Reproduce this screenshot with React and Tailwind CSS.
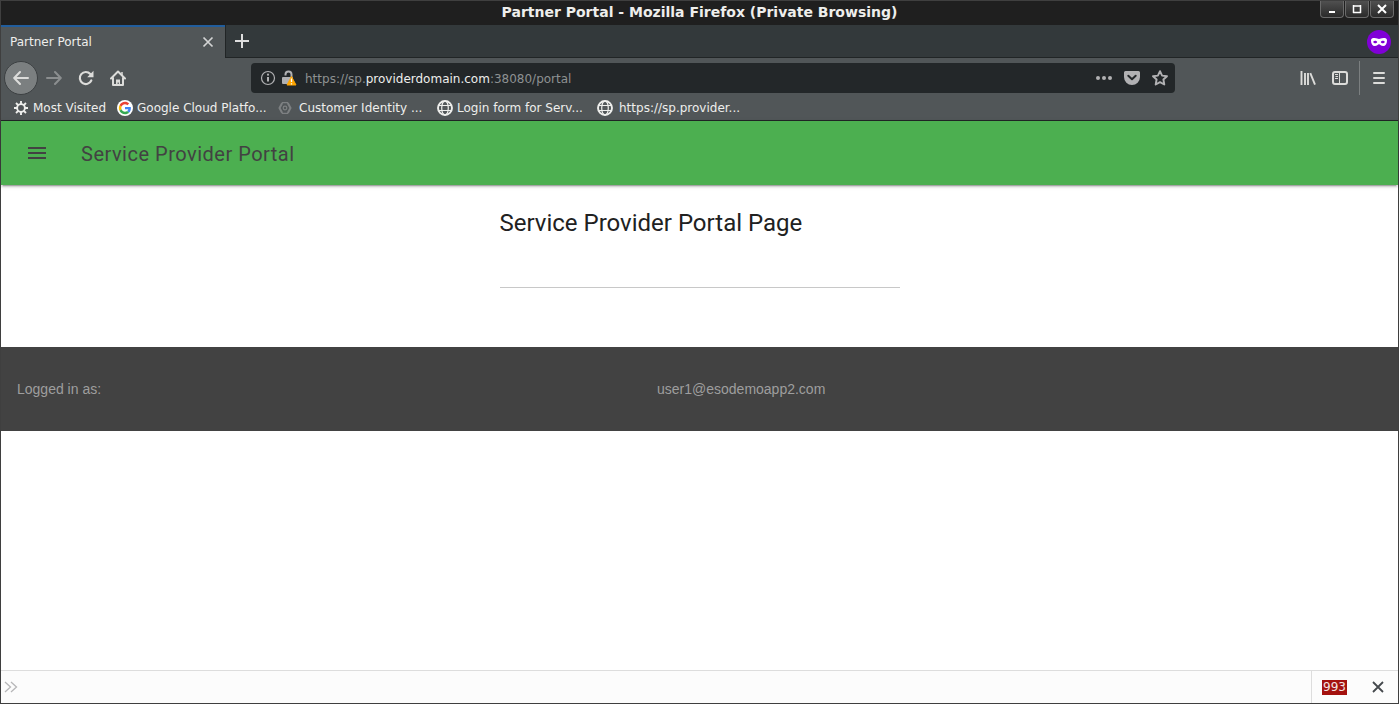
import React from "react";

function Icon({ size = 16, box = "0 0 16 16", className = "", children }) {
  return (
    <svg width={size} height={size} viewBox={box} fill="none" className={`shrink-0 ${className}`} aria-hidden="true">
      {children}
    </svg>
  );
}

const stroke = { stroke: "currentColor", strokeWidth: 2, strokeLinecap: "round", strokeLinejoin: "round" };

const BackIcon = () => (
  <Icon><path d="M15 8H2M7 2L1.200 8L7 14" {...stroke} /></Icon>
);
const ForwardIcon = () => (
  <Icon><path d="M1 8h13M9 2L14.800 8L9 14" {...stroke} /></Icon>
);
const ReloadIcon = () => (
  <Icon>
    <path d="M13.300 10.500A6 6 0 1 1 12.300 4" stroke="currentColor" strokeWidth="2.200" strokeLinecap="round" />
    <path d="M15.500 0.800V7.200H9.200Z" fill="currentColor" />
  </Icon>
);
const HomeIcon = () => (
  <Icon>
    <path d="M1 8.500L8 1.500L15 8.500" {...stroke} />
    <path d="M3 8v7h10V8" {...stroke} />
    <path d="M6 15v-5.500h4V15H8.800v-2.500H7.600V15Z" fill="currentColor" />
    <path d="M12 2v3" stroke="currentColor" strokeWidth="1.500" />
  </Icon>
);
const InfoIcon = () => (
  <Icon>
    <circle cx="8" cy="8" r="6.500" stroke="currentColor" strokeWidth="1.200" />
    <path d="M8 7v4.500" stroke="currentColor" strokeWidth="2" />
    <circle cx="8" cy="4.700" r="1.100" fill="currentColor" />
  </Icon>
);
const LockIcon = () => (
  <Icon>
    <path d="M4.500 5.500V4.500a3 3 0 0 1 6 0V8" stroke="#b1b1b3" strokeWidth="2" />
    <rect x="1" y="7" width="11" height="7" rx="1" fill="#b1b1b3" />
    <path d="M10.500 6.500L15 15H6Z" fill="#ffa500" stroke="#ffa500" strokeLinejoin="round" />
    <path d="M10.500 8.500v3.500M10.500 13.200v1.300" stroke="#fff" strokeWidth="1.300" />
  </Icon>
);
const DotsIcon = () => (
  <Icon><g fill="currentColor"><circle cx="2" cy="8" r="2" /><circle cx="8" cy="8" r="2" /><circle cx="14" cy="8" r="2" /></g></Icon>
);
const PocketIcon = () => (
  <Icon>
    <path d="M1.500 1h13A1.500 1.500 0 0 1 16 2.500V7A8 8 0 0 1 0 7V2.500A1.500 1.500 0 0 1 1.500 1Z" fill="currentColor" />
    <path d="M4.300 5.800L8 9.300L11.700 5.800" stroke="#232729" strokeWidth="2" strokeLinecap="round" strokeLinejoin="round" />
  </Icon>
);
const StarIcon = () => (
  <Icon>
    <path d="M8 1.200L10.100 5.600L15 6.200L11.400 9.500L12.300 14.500L8 12.100L3.700 14.500L4.600 9.500L1 6.200L5.900 5.600Z" stroke="currentColor" strokeWidth="1.900" strokeLinejoin="round" />
  </Icon>
);
const LibraryIcon = () => (
  <Icon><path d="M1.500 1v14M5 3v12M8 3v12M10.300 3.200L15 14.600" stroke="currentColor" strokeWidth="1.900" /></Icon>
);
const SidebarIcon = () => (
  <Icon>
    <rect x="1" y="2" width="14" height="12" rx="2" stroke="currentColor" strokeWidth="2" />
    <path d="M7.500 2v12" stroke="currentColor" />
    <path d="M3 4.500h3M3.500 6.500H6M3 8.500h3" stroke="currentColor" />
  </Icon>
);
const MenuIcon = () => (
  <Icon><path d="M3 3h10M3 8h10M3 13h10" {...stroke} /></Icon>
);
const GearIcon = () => (
  <Icon>
    <circle cx="8" cy="8" r="3.900" stroke="currentColor" strokeWidth="1.900" />
    <path d="M8 1v3M8 12v3M1 8h3M12 8h3M3 3l2.200 2.200M10.800 10.800L13 13M13 3l-2.200 2.200M5.200 10.800L3 13" stroke="currentColor" strokeWidth="1.900" />
  </Icon>
);
const GoogleIcon = () => (
  <Icon box="0 0 48 48">
    <circle cx="24" cy="24" r="24" fill="#fff" />
    <g transform="translate(5.500 5.500) scale(0.770)">
      <path fill="#EA4335" d="M24 9.500c3.540 0 6.710 1.220 9.210 3.600l6.850-6.850C35.900 2.380 30.470 0 24 0 14.620 0 6.510 5.380 2.560 13.220l7.980 6.190C12.430 13.720 17.740 9.500 24 9.500z" />
      <path fill="#4285F4" d="M46.980 24.550c0-1.570-.15-3.090-.38-4.550H24v9.020h12.940c-.58 2.960-2.260 5.480-4.780 7.180l7.730 6c4.510-4.180 7.090-10.360 7.090-17.650z" />
      <path fill="#FBBC05" d="M10.530 28.590c-.48-1.450-.76-2.990-.76-4.590s.27-3.140.76-4.590l-7.980-6.190C.92 16.460 0 20.120 0 24c0 3.880.92 7.540 2.560 10.780l7.970-6.190z" />
      <path fill="#34A853" d="M24 48c6.480 0 11.930-2.130 15.890-5.810l-7.730-6c-2.150 1.450-4.920 2.300-8.160 2.300-6.260 0-11.570-4.220-13.470-9.910l-7.980 6.190C6.510 42.620 14.620 48 24 48z" />
    </g>
  </Icon>
);
const HexIcon = () => (
  <Icon className="text-[#7d8082]">
    <path d="M5.200 3L2.500 8L5.200 13M10.800 3L13.500 8L10.800 13" stroke="currentColor" strokeWidth="2" />
    <path d="M5 2.700h6M5 13.300h6" stroke="currentColor" strokeWidth="1.200" />
    <circle cx="8" cy="8" r="1.800" stroke="currentColor" strokeWidth="1.200" />
  </Icon>
);
const GlobeIcon = () => (
  <Icon>
    <circle cx="8" cy="8" r="7" stroke="currentColor" strokeWidth="1.900" />
    <ellipse cx="8" cy="8" rx="3.300" ry="7" stroke="currentColor" strokeWidth="1.200" />
    <path d="M2 5.500h12M2 10.500h12" stroke="currentColor" strokeWidth="1.200" />
  </Icon>
);
const MaskIcon = () => (
  <svg width="24" height="24" viewBox="0 0 24 24" role="img" aria-label="Private browsing">
    <circle cx="12" cy="12" r="12" fill="#8000d7" />
    <path fillRule="evenodd" fill="#fff" d="M4 10.500C4 8.300 5.300 8 7.500 8C9.800 8 10.800 9 12 9S14.200 8 16.500 8C18.700 8 20 8.300 20 10.500C20 14 18.500 16 16.200 16C14 16 13.200 14.200 12 14.200S10 16 7.800 16C5.500 16 4 14 4 10.500ZM6 12C6.800 13 7.400 13.300 8.200 13.300S10 12.800 10.300 12C9.800 11.200 9 10.700 8.200 10.700S6.600 11.200 6 12ZM13.700 12C14 12.800 15 13.300 15.800 13.300S17.200 13 18 12C17.400 11.200 16.600 10.700 15.800 10.700S14.200 11.200 13.700 12Z" />
  </svg>
);

function WindowButton({ label, children }) {
  return (
    <button aria-label={label} className="flex h-[17px] w-6 items-center justify-center rounded-b-sm border border-t-0 border-[#6a6a6a] bg-linear-to-b from-[#505050] to-[#2b2b2b] text-white">
      <Icon size={12} box="0 0 12 12">{children}</Icon>
    </button>
  );
}

function ToolButton({ label, className = "", children }) {
  return (
    <button aria-label={label} className={`flex size-8 shrink-0 items-center justify-center ${className}`}>
      {children}
    </button>
  );
}

const bookmarks = [
  { text: "Google Cloud Platfo...", icon: <GoogleIcon /> },
  { text: "Customer Identity ...", icon: <HexIcon />, wide: true },
  { text: "Login form for Serv...", icon: <GlobeIcon /> },
  { text: "https://sp.provider...", icon: <GlobeIcon />, wide: true },
];

function TitleBar() {
  return (
    <div className="grid h-6 grid-cols-[1fr_auto_1fr] items-start bg-[#1f1f1f]">
      <div />
      <h1 className="text-[14px] leading-[22px] font-bold text-[#eeeeec]">Partner Portal - Mozilla Firefox (Private Browsing)</h1>
      <div className="flex justify-end gap-px pr-1">
        <WindowButton label="Minimize"><path d="M3 9h6" stroke="currentColor" strokeWidth="2" /></WindowButton>
        <WindowButton label="Maximize"><path d="M2 3h8M2.500 2v8M9.500 2v8M2 9.500h8" stroke="currentColor" strokeWidth="1.500" /></WindowButton>
        <WindowButton label="Close window"><path d="M2 2l8 8M10 2l-8 8" stroke="currentColor" strokeWidth="2" /></WindowButton>
      </div>
    </div>
  );
}

function TabStrip() {
  return (
    <div className="flex h-[33px] bg-[#33393b]">
      <div className="flex w-56 items-center border-t-2 border-[#215d9c] bg-[#515658] pr-[7px] pb-[2px] pl-[9px] text-[#eeeeec]">
        <span className="flex-1">Partner Portal</span>
        <button aria-label="Close tab" className="flex size-5 items-center justify-center">
          <Icon><path d="M3.500 3.500l9 9M12.500 3.500l-9 9" stroke="#d3d4d4" strokeWidth="1.700" /></Icon>
        </button>
      </div>
      <div className="flex flex-1 items-center justify-between border-b border-l border-[#212526] pr-[7px]">
        <ToolButton label="New tab" className="text-[#dedede]">
          <Icon><path d="M8 1v14M1 8h14" stroke="currentColor" strokeWidth="2" /></Icon>
        </ToolButton>
        <div className="pt-px">
          <MaskIcon />
        </div>
      </div>
    </div>
  );
}

function NavBar() {
  return (
    <div className="flex h-10 items-center bg-[#515658] pr-[3px] text-[#dcdcda]">
      <div className="flex w-[250px] items-center pl-[3px]">
        <button aria-label="Back" className="flex size-[34px] shrink-0 items-center justify-center rounded-full border border-[#3c4042] bg-[#7b7f80]">
          <BackIcon />
        </button>
        <ToolButton label="Forward" className="text-[#8b8e8f]"><ForwardIcon /></ToolButton>
        <ToolButton label="Reload"><ReloadIcon /></ToolButton>
        <ToolButton label="Home"><HomeIcon /></ToolButton>
      </div>
      <div className="flex h-[30px] flex-1 items-center rounded bg-[#232729] pr-[7px] pl-[9px] text-[#b1b1b3]">
        <InfoIcon />
        <span className="ml-[5px]"><LockIcon /></span>
        <p className="ml-2 flex-1 pt-px text-[#8e9192]">
          https://sp.<span className="text-[#eeeeec]">providerdomain.com</span>:38080/portal
        </p>
        <div className="flex items-center gap-3">
          <button aria-label="Page actions"><DotsIcon /></button>
          <button aria-label="Save to Pocket"><PocketIcon /></button>
          <button aria-label="Bookmark this page"><StarIcon /></button>
        </div>
      </div>
      <div className="flex w-[220px] items-center justify-end">
        <ToolButton label="Library"><LibraryIcon /></ToolButton>
        <ToolButton label="Sidebars"><SidebarIcon /></ToolButton>
        <div className="mx-[3px] h-[34px] w-px bg-[#7b7f80]" />
        <ToolButton label="Open menu"><MenuIcon /></ToolButton>
      </div>
    </div>
  );
}

function BookmarksBar() {
  return (
    <nav aria-label="Bookmarks" className="flex h-[23px] items-center border-b border-[#212526] bg-[#515658] pb-[2px] pl-3 text-[#eeeeec]">
      <a href="#" className="flex w-[104px] items-center gap-1 whitespace-nowrap">
        <GearIcon />
        Most Visited
      </a>
      {bookmarks.map((b) => (
        <a key={b.text} href="#" className={`flex w-40 items-center whitespace-nowrap ${b.wide ? "gap-[6px]" : "gap-1"}`}>
          {b.icon}
          {b.text}
        </a>
      ))}
    </nav>
  );
}

export default function App() {
  return (
    <div className="flex min-h-screen flex-col border border-[#3f3f3f] bg-white font-['DejaVu_Sans',sans-serif] text-[12px] leading-4">
      <TitleBar />
      <TabStrip />
      <NavBar />
      <BookmarksBar />
      <header className="relative flex h-16 items-center bg-[#4caf50] pl-6 text-[#424242] shadow-[0_2px_2px_0_rgba(0,0,0,0.14),0_3px_1px_-2px_rgba(0,0,0,0.2),0_1px_5px_0_rgba(0,0,0,0.12)]">
        <button aria-label="Open navigation">
          <Icon size={24} box="0 0 24 24"><path d="M3 18h18v-2H3v2zm0-5h18v-2H3v2zm0-7v2h18V6H3z" fill="currentColor" /></Icon>
        </button>
        <span className="ml-8 pt-[2px] font-[Roboto,sans-serif] text-[20px] leading-6 tracking-wide">Service Provider Portal</span>
      </header>
      <main className="flex flex-1 flex-col">
        <section className="mx-auto w-full max-w-[400px] pt-[22px] pb-[59px]">
          <h2 className="font-[Roboto,sans-serif] text-[24px] leading-8 text-[#212121]">Service Provider Portal Page</h2>
          <hr className="mt-12 border-[#c8c8c8]" />
        </section>
        <footer className="grid grid-cols-[640px_1fr] bg-[#424242] px-4 py-8 font-['Liberation_Sans',sans-serif] text-[14px] leading-5 text-[#9e9e9e]">
          <span>Logged in as:</span>
          <span>user1@esodemoapp2.com</span>
        </footer>
      </main>
      <div className="flex h-[33px] items-center border-t border-[#dddddd] bg-[#fcfcfc]">
        <label className="flex h-full flex-1 items-center pl-[2px]">
          <Icon><path d="M2 3l5.500 5L2 13M8 3l5.500 5L8 13" stroke="#b6b6b8" strokeWidth="1.300" /></Icon>
          <input aria-label="Command" className="h-full flex-1 px-2 outline-none" />
        </label>
        <div className="flex h-full w-[87px] items-center justify-between border-l border-[#dddddd] pr-3 pl-[10px]">
          <button className="bg-[#a4120f] px-px text-[12px] leading-[15px] text-[#f3e4e3]">993</button>
          <button aria-label="Close toolbar" className="text-[#45494d]">
            <Icon><path d="M3 3l10 10M13 3l-10 10" stroke="currentColor" strokeWidth="1.800" /></Icon>
          </button>
        </div>
      </div>
    </div>
  );
}
